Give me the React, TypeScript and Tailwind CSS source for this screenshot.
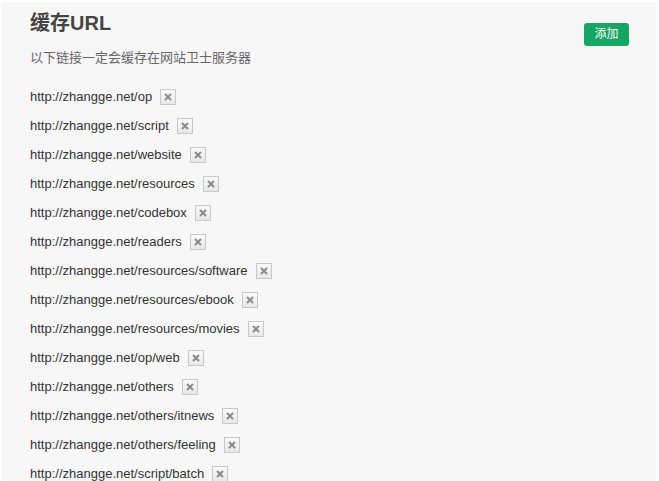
const urls = [
  "http://zhangge.net/op",
  "http://zhangge.net/script",
  "http://zhangge.net/website",
  "http://zhangge.net/resources",
  "http://zhangge.net/codebox",
  "http://zhangge.net/readers",
  "http://zhangge.net/resources/software",
  "http://zhangge.net/resources/ebook",
  "http://zhangge.net/resources/movies",
  "http://zhangge.net/op/web",
  "http://zhangge.net/others",
  "http://zhangge.net/others/itnews",
  "http://zhangge.net/others/feeling",
  "http://zhangge.net/script/batch",
];

const App = () => {
  return (
    <div className="h-[481px] overflow-hidden bg-white pt-[2px] pl-[1px] pr-[3px]">
      <div
        className="h-full bg-[#f7f7f7] pl-[29px] pr-[27px] pt-[7px] text-[#333]"
        style={{ fontFamily: '"Liberation Sans", "Noto Sans CJK SC", sans-serif' }}
      >
        <div className="flex items-start justify-between">
          <div>
            <h1 className="text-[20px] leading-[28px] font-bold text-[#444]">缓存URL</h1>
            <p className="mt-[11px] text-[13px] leading-[20px] text-[#666]">以下链接一定会缓存在网站卫士服务器</p>
          </div>
          <button className="mt-[14px] h-[23px] w-[45px] rounded-[3px] bg-[#17a565] text-[12px] leading-[23px] text-white">
            添加
          </button>
        </div>
        <ul className="mt-[14px]">
          {urls.map((url) => (
            <li key={url} className="flex h-[29px] items-center text-[13px] text-[#333]">
              <span>{url}</span>
              <span className="ml-[8px] flex h-[16px] w-[16px] items-center justify-center border border-[#c8c8c8] bg-gradient-to-b from-[#fafafa] to-[#e8e8e8]">
                <svg width="8" height="8" viewBox="0 0 8 8">
                  <path d="M1 1L7 7M7 1L1 7" stroke="#8a8a8a" strokeWidth="2" />
                </svg>
              </span>
            </li>
          ))}
        </ul>
      </div>
    </div>
  );
};

export default App;
